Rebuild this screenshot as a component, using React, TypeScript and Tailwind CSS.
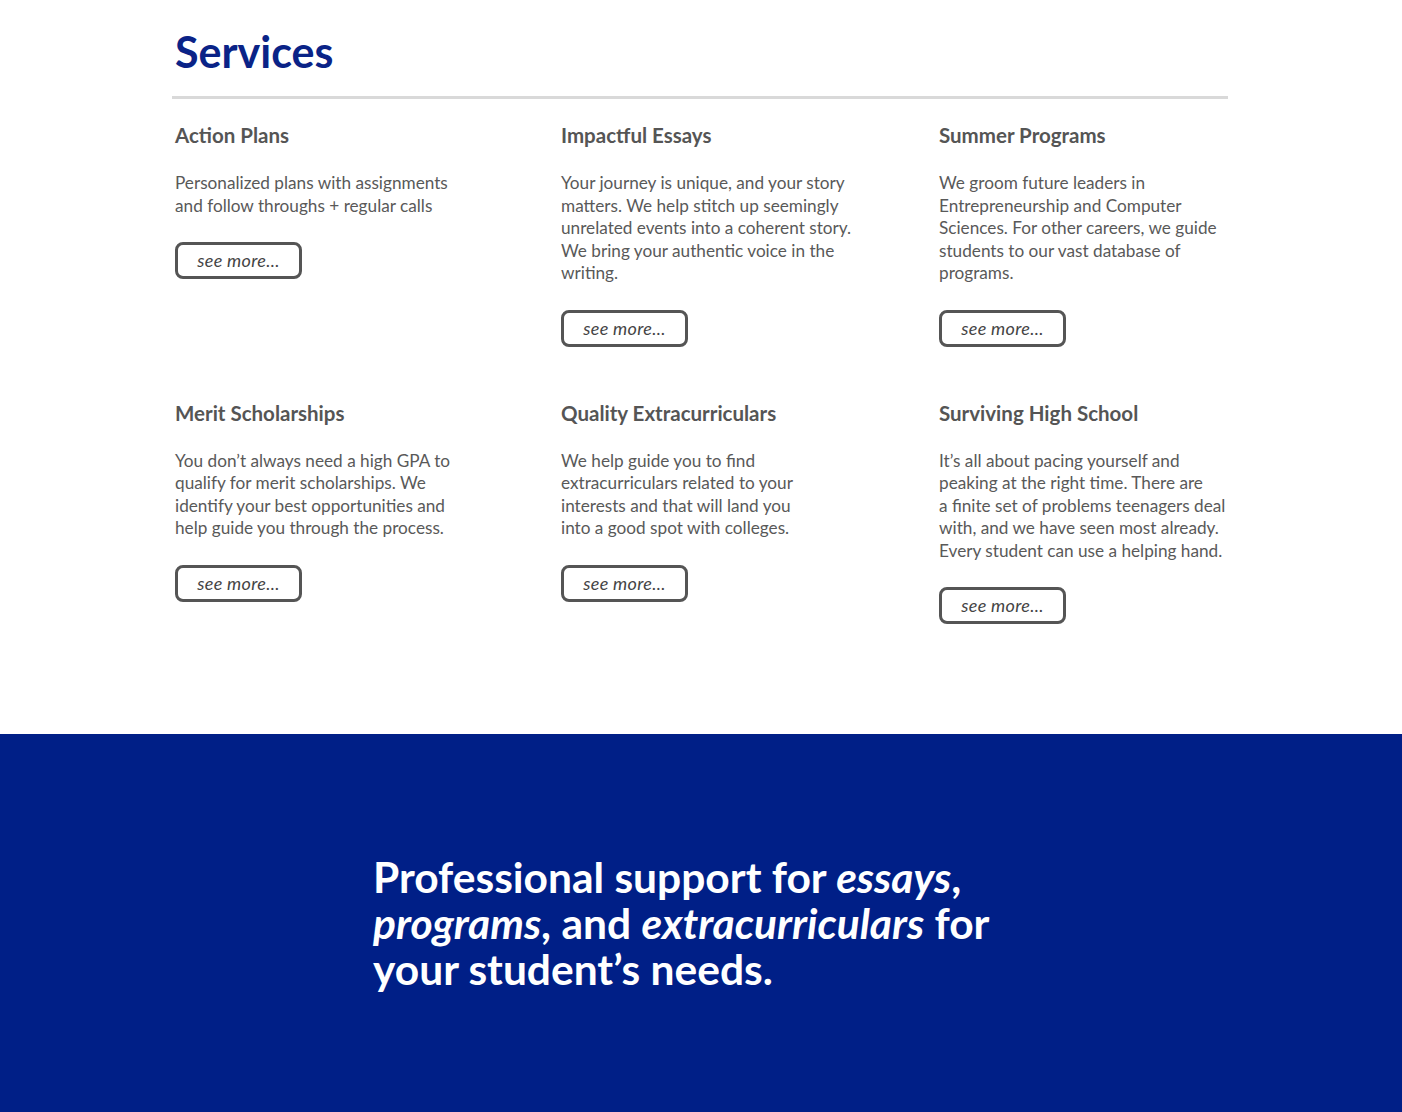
import React from "react";

const services = [
  {
    title: "Action Plans",
    text: ["Personalized plans with assignments", "and follow throughs + regular calls"],
  },
  {
    title: "Impactful Essays",
    text: [
      "Your journey is unique, and your story",
      "matters. We help stitch up seemingly",
      "unrelated events into a coherent story.",
      "We bring your authentic voice in the",
      "writing.",
    ],
  },
  {
    title: "Summer Programs",
    text: [
      "We groom future leaders in",
      "Entrepreneurship and Computer",
      "Sciences. For other careers, we guide",
      "students to our vast database of",
      "programs.",
    ],
  },
  {
    title: "Merit Scholarships",
    text: [
      "You don’t always need a high GPA to",
      "qualify for merit scholarships. We",
      "identify your best opportunities and",
      "help guide you through the process.",
    ],
  },
  {
    title: "Quality Extracurriculars",
    text: [
      "We help guide you to find",
      "extracurriculars related to your",
      "interests and that will land you",
      "into a good spot with colleges.",
    ],
  },
  {
    title: "Surviving High School",
    text: [
      "It’s all about pacing yourself and",
      "peaking at the right time. There are",
      "a finite set of problems teenagers deal",
      "with, and we have seen most already.",
      "Every student can use a helping hand.",
    ],
  },
];

function ServiceCard({ title, text }: { title: string; text: string[] }) {
  return (
    <div className="flex flex-col items-start">
      <h3 className="text-[20.5px] leading-[28px] font-bold text-[#555555] font-['Lato',sans-serif]">{title}</h3>
      <p className="mt-[23px] text-[17.2px] leading-[22.5px] text-[#595959] font-['Lato',sans-serif]">
        {text.map((line, i) => (
          <span key={i} className="block whitespace-nowrap">
            {line}
          </span>
        ))}
      </p>
      <button className="mt-[25px] w-[127px] h-[37px] border-[3px] border-[#555555] rounded-[8px] text-[18px] tracking-[0.3px] italic text-[#444444] font-['Lato',sans-serif]">
        see more...
      </button>
    </div>
  );
}

export default function App() {
  return (
    <div className="w-[1402px] bg-white">
      <section className="pt-[28px] pb-[110px]">
        <div className="w-[1056px] ml-[172px]">
          <h1 className="pl-[3px] text-[43px] leading-[48px] font-bold text-[#0a2387] font-['Lato',sans-serif]">Services</h1>
          <div className="mt-[20px] h-[3px] bg-[#d9d9d9]" />
          <div className="pl-[3px] mt-[22px] grid grid-cols-[386px_378px_1fr] gap-y-[52px]">
            {services.map((s) => (
              <ServiceCard key={s.title} title={s.title} text={s.text} />
            ))}
          </div>
        </div>
      </section>
      <section className="h-[378px] bg-[#001f87] flex items-center">
        <p className="ml-[373px] text-[42.5px] leading-[46px] font-bold text-white font-['Lato',sans-serif]">
          Professional support for <em>essays</em>,<br />
          <em>programs</em>, and <em>extracurriculars</em> for
          <br />
          your student’s needs.
        </p>
      </section>
    </div>
  );
}
